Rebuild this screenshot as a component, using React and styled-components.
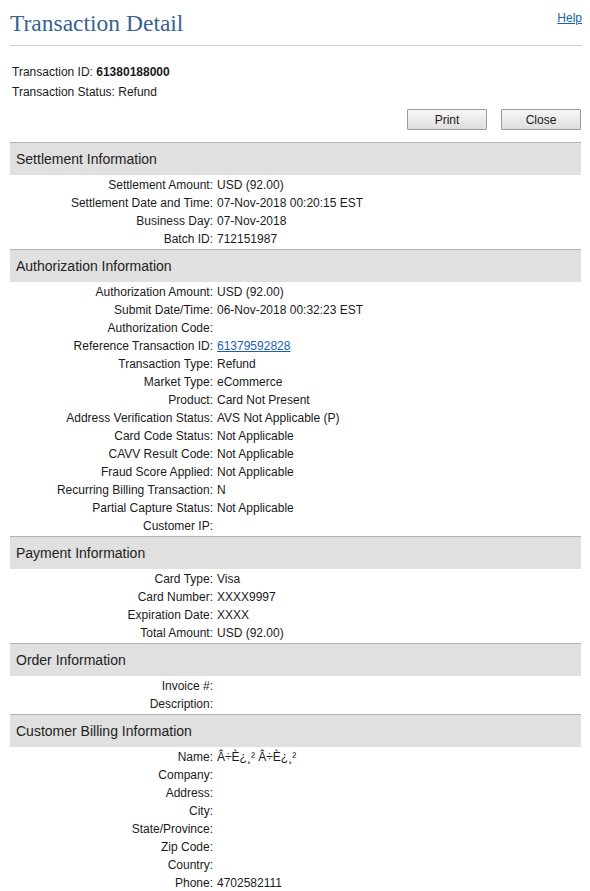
import React from 'react';
import styled, { createGlobalStyle } from 'styled-components';

const GlobalStyle = createGlobalStyle`
    body {
        margin: 0;
        background: #fff;
        font-family: "Liberation Sans", Arial, sans-serif;
        font-size: 12px;
        color: #1a1a1a;
    }
`;

const Page = styled.div`
    width: 572px;
    padding: 0 8px 0 10px;
`;

const TitleBar = styled.div`
    display: flex;
    justify-content: space-between;
    align-items: flex-start;
    height: 45px;
    border-bottom: 1px solid #cfcfcf;
    & h1 {
        margin: 9px 0 0 0;
        font-family: "Liberation Serif", "Times New Roman", serif;
        font-weight: normal;
        font-size: 23.5px;
        line-height: 28px;
        color: #3a6291;
    }
    & a {
        margin-top: 11px;
        color: #1b5fb0;
        font-size: 12px;
        text-decoration: underline;
    }
`;

const Summary = styled.div`
    padding: 16px 0 0 2px;
    line-height: 20px;
    & b {
        font-weight: bold;
    }
`;

const Actions = styled.div`
    display: flex;
    justify-content: flex-end;
    gap: 14px;
    padding: 7px 1px 12px 0;
`;

const Button = styled.button`
    width: 80px;
    height: 21px;
    padding: 0;
    font-family: "Liberation Sans", Arial, sans-serif;
    font-size: 12px;
    color: #1a1a1a;
    background: linear-gradient(#f7f7f7, #dedede);
    border: 1px solid #9a9a9a;
    border-radius: 1px;
`;

const SectionHeader = styled.div`
    height: 32px;
    line-height: 33px;
    margin-right: 1px;
    padding-left: 6px;
    font-size: 14px;
    color: #222;
    background: #e0e0e0;
    border-top: 1px solid #b3b3b3;
`;

const Rows = styled.div`
    display: grid;
    grid-template-columns: 207px 1fr;
    padding: 1px 0;
    line-height: 18px;
`;

const Label = styled.div`
    text-align: right;
    padding-right: 4px;
`;

const Value = styled.div`
    & a {
        color: #1b5fb0;
        text-decoration: underline;
    }
`;

const sections = [
    {
        title: 'Settlement Information',
        rows: [
            ['Settlement Amount:', 'USD (92.00)'],
            ['Settlement Date and Time:', '07-Nov-2018 00:20:15 EST'],
            ['Business Day:', '07-Nov-2018'],
            ['Batch ID:', '712151987'],
        ],
    },
    {
        title: 'Authorization Information',
        rows: [
            ['Authorization Amount:', 'USD (92.00)'],
            ['Submit Date/Time:', '06-Nov-2018 00:32:23 EST'],
            ['Authorization Code:', ''],
            ['Reference Transaction ID:', <a href="#">61379592828</a>],
            ['Transaction Type:', 'Refund'],
            ['Market Type:', 'eCommerce'],
            ['Product:', 'Card Not Present'],
            ['Address Verification Status:', 'AVS Not Applicable (P)'],
            ['Card Code Status:', 'Not Applicable'],
            ['CAVV Result Code:', 'Not Applicable'],
            ['Fraud Score Applied:', 'Not Applicable'],
            ['Recurring Billing Transaction:', 'N'],
            ['Partial Capture Status:', 'Not Applicable'],
            ['Customer IP:', ''],
        ],
    },
    {
        title: 'Payment Information',
        rows: [
            ['Card Type:', 'Visa'],
            ['Card Number:', 'XXXX9997'],
            ['Expiration Date:', 'XXXX'],
            ['Total Amount:', 'USD (92.00)'],
        ],
    },
    {
        title: 'Order Information',
        rows: [
            ['Invoice #:', ''],
            ['Description:', ''],
        ],
    },
    {
        title: 'Customer Billing Information',
        rows: [
            ['Name:', 'Â÷È¿¸² Â÷È¿¸²'],
            ['Company:', ''],
            ['Address:', ''],
            ['City:', ''],
            ['State/Province:', ''],
            ['Zip Code:', ''],
            ['Country:', ''],
            ['Phone:', '4702582111'],
        ],
    },
];

const App = () => {
    return (
        <Page>
            <GlobalStyle />
            <TitleBar>
                <h1>Transaction Detail</h1>
                <a href="#">Help</a>
            </TitleBar>

            <Summary>
                <div>Transaction ID: <b>61380188000</b></div>
                <div>Transaction Status: Refund</div>
            </Summary>

            <Actions>
                <Button>Print</Button>
                <Button>Close</Button>
            </Actions>

            {sections.map((s) => (
                <div key={s.title}>
                    <SectionHeader>{s.title}</SectionHeader>
                    <Rows>
                        {s.rows.map(([label, value]) => (
                            <React.Fragment key={label}>
                                <Label>{label}</Label>
                                <Value>{value}</Value>
                            </React.Fragment>
                        ))}
                    </Rows>
                </div>
            ))}
        </Page>
    );
};

export default App;
